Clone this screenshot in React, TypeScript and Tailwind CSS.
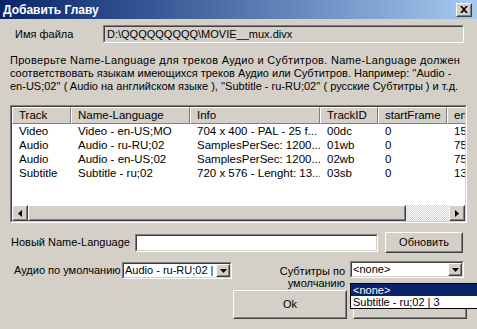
import type { ReactNode } from 'react';

const tracks = [
  ['Video', 'Video - en-US;MO', '704 x 400 - PAL - 25 f...', '00dc', '0', '15000'],
  ['Audio', 'Audio - ru-RU;02', 'SamplesPerSec: 1200...', '01wb', '0', '75000'],
  ['Audio', 'Audio - en-US;02', 'SamplesPerSec: 1200...', '02wb', '0', '75000'],
  ['Subtitle', 'Subtitle - ru;02', '720 x 576 - Lenght: 13...', '03sb', '0', '13000'],
];

const columns = ['Track', 'Name-Language', 'Info', 'TrackID', 'startFrame', 'endFrame'];

export default function App() {
  return (
    <div className="relative h-[329px] w-[477px] overflow-hidden whitespace-nowrap bg-[#d4d0c8] font-['Liberation_Sans',Arial,sans-serif] text-[11px] text-black">
      {/* title bar */}
      <div className="flex h-[19px] items-center justify-between bg-gradient-to-r from-[#0a246a] to-[#a6caf0] pl-[3px] pr-[5px]">
        <span className="text-[12px] font-bold leading-none text-white">Добавить Главу</span>
        <Raised className="h-[14px] w-[16px]">
          <svg width="8" height="7" viewBox="0 0 8 7">
            <path d="M0 0h2l2 2 2-2h2L5 3.5 8 7H6L4 5 2 7H0l3-3.5z" fill="#000" />
          </svg>
        </Raised>
      </div>

      <div className="flex flex-col px-[10px]">
        <div className="mt-[6px] flex items-center">
          <span className="ml-[5px] w-[88px]">Имя файла</span>
          <Sunken className="h-[18px] w-[361px]" inner="flex items-center bg-[#d4d0c8]">
            <span className="pl-[2px] leading-[13px]">D:\QQQQQQQQQ\MOVIE__mux.divx</span>
          </Sunken>
        </div>

        <div className="mt-[11px] flex flex-col leading-[13px]">
          <span className="tracking-[0.3px]">Проверьте Name-Language для треков Аудио и Субтитров. Name-Language должен</span>
          <span>соответствовать языкам имеющихся треков Аудио или Субтитров. Например: ''Audio -</span>
          <span>en-US;02'' ( Audio на английском языке ), ''Subtitle - ru-RU;02'' ( русские Субтитры ) и т.д.</span>
        </div>

        {/* track list */}
        <Sunken className="mt-[12px] h-[118px] w-[457px]" inner="flex flex-col bg-white">
          <div className="flex-1 overflow-hidden">
            <div className="grid w-[520px] grid-cols-[59px_119px_130px_58px_69px_85px]">
              {columns.map((col) => (
                <div
                  key={col}
                  className="h-[17px] overflow-hidden border border-t-white border-l-white border-b-[#808080] border-r-[#808080] bg-[#d4d0c8] pl-[6px] text-[11.5px] leading-[15px]"
                >
                  {col}
                </div>
              ))}
              {tracks.map((row, i) =>
                row.map((cell, j) => (
                  <div key={`${i}-${j}`} className="h-[14px] overflow-hidden pl-[7px] text-[11.5px] leading-[14px]">
                    {cell}
                  </div>
                )),
              )}
            </div>
          </div>
          <div className="flex h-[16px]">
            <Raised className="h-[16px] w-[16px]">
              <svg width="4" height="7" viewBox="0 0 4 7">
                <path d="M4 0v7L0 3.5z" fill="#000" />
              </svg>
            </Raised>
            <Raised className="h-[16px] w-[378px]" />
            <div className="flex-1 bg-[repeating-conic-gradient(#ffffff_0%_25%,#d4d0c8_0%_50%)] bg-[length:2px_2px]" />
            <Raised className="h-[16px] w-[16px]">
              <svg width="4" height="7" viewBox="0 0 4 7">
                <path d="M0 0v7l4-3.5z" fill="#000" />
              </svg>
            </Raised>
          </div>
        </Sunken>

        <div className="mt-[9px] flex h-[21px] items-center">
          <span className="ml-px w-[124px]">Новый Name-Language</span>
          <Sunken className="h-[18px] w-[243px]" inner="bg-white" />
          <Raised className="ml-[7px] h-[21px] w-[78px]">Обновить</Raised>
        </div>

        <div className="mt-[8px] flex items-start">
          <span className="ml-[4px] mt-[2px] w-[108px] leading-[14px]">Аудио по умолчанию</span>
          <Combo value="Audio - ru-RU;02 | 1" className="mt-px w-[110px]" />
          <div className="ml-[40px] mt-[4px] w-[73px] text-right leading-[12px]">
            Субтитры по
            <br />
            умолчанию
          </div>
          <Combo value="<none>" className="ml-[5px] w-[114px]" />
        </div>

        <div className="mt-[1px] flex justify-end">
          <Raised className="h-[29px] w-[114px]">Ok</Raised>
          <Raised className="ml-[6px] h-[29px] w-[114px]">Отмена</Raised>
        </div>
      </div>

      {/* open dropdown of the subtitle combo */}
      <div className="absolute left-[350px] top-[283px] w-[130px] border border-black bg-white">
        <div className="h-[12px] bg-[#0a246a] pl-[2px] leading-[12px] text-white">&lt;none&gt;</div>
        <div className="h-[12px] pl-[2px] leading-[12px]">Subtitle - ru;02 | 3</div>
      </div>
    </div>
  );
}

function Sunken({ className, inner, children }: { className: string; inner: string; children?: ReactNode }) {
  return (
    <div className={`shrink-0 border border-t-[#808080] border-l-[#808080] border-b-white border-r-white ${className}`}>
      <div className={`h-full overflow-hidden border border-t-[#404040] border-l-[#404040] border-b-[#d4d0c8] border-r-[#d4d0c8] ${inner}`}>
        {children}
      </div>
    </div>
  );
}

function Raised({ className, children }: { className: string; children?: ReactNode }) {
  return (
    <div className={`shrink-0 border border-t-white border-l-white border-b-[#404040] border-r-[#404040] bg-[#d4d0c8] ${className}`}>
      <div className="flex h-full items-center justify-center border border-t-[#d4d0c8] border-l-[#d4d0c8] border-b-[#808080] border-r-[#808080]">
        {children}
      </div>
    </div>
  );
}

function Combo({ value, className }: { value: string; className: string }) {
  return (
    <Sunken className={`h-[17px] ${className}`} inner="flex bg-white">
      <span className="flex-1 overflow-hidden pl-px leading-[13px]">{value}</span>
      <Raised className="h-[13px] w-[14px]">
        <svg width="7" height="4" viewBox="0 0 7 4">
          <path d="M0 0h7L3.5 4z" fill="#000" />
        </svg>
      </Raised>
    </Sunken>
  );
}
